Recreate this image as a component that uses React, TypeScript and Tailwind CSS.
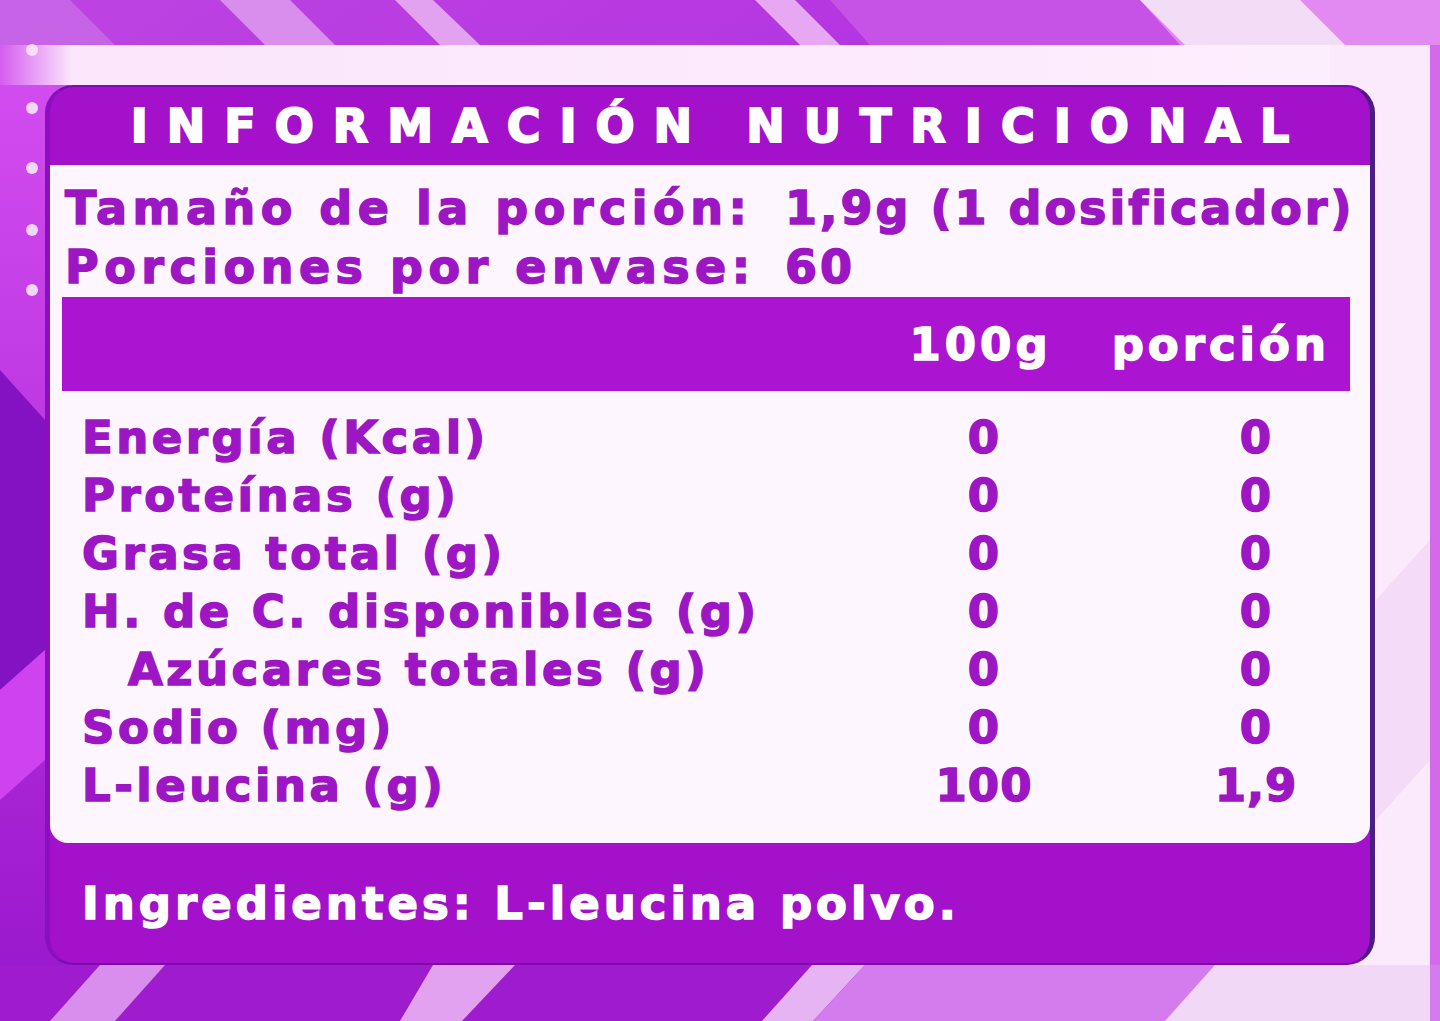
import React from "react";

const font = { fontFamily: '"DejaVu Sans", "Liberation Sans", sans-serif' };

const rows: { label: string; per100: string; portion: string; indent?: boolean }[] = [
  { label: "Energía (Kcal)", per100: "0", portion: "0" },
  { label: "Proteínas (g)", per100: "0", portion: "0" },
  { label: "Grasa total (g)", per100: "0", portion: "0" },
  { label: "H. de C. disponibles (g)", per100: "0", portion: "0" },
  { label: "Azúcares totales (g)", per100: "0", portion: "0", indent: true },
  { label: "Sodio (mg)", per100: "0", portion: "0" },
  { label: "L-leucina (g)", per100: "100", portion: "1,9" },
];

function Backdrop() {
  return (
    <svg className="absolute inset-0" width="1440" height="1021" viewBox="0 0 1440 1021" aria-hidden>
      <defs>
        <linearGradient id="base" x1="0" y1="0" x2="1" y2="1">
          <stop offset="0" stopColor="#bd44e2" />
          <stop offset="0.5" stopColor="#b02ee0" />
          <stop offset="1" stopColor="#9a1ccb" />
        </linearGradient>
        <linearGradient id="band" x1="0" y1="0" x2="1" y2="0">
          <stop offset="0" stopColor="#d55cef" />
          <stop offset="0.05" stopColor="#fbe6fc" />
          <stop offset="1" stopColor="#fdeefd" />
        </linearGradient>
        <linearGradient id="left" x1="0" y1="0" x2="0" y2="1">
          <stop offset="0" stopColor="#d24cf0" />
          <stop offset="1" stopColor="#9a18cc" />
        </linearGradient>
      </defs>
      <rect width="1440" height="1021" fill="url(#base)" />
      {/* top stripes */}
      <polygon points="0,0 70,0 115,45 0,45" fill="#c763e6" />
      <polygon points="220,0 290,0 335,45 265,45" fill="#d98ded" />
      <polygon points="395,0 433,0 480,45 440,45" fill="#e2a2f0" />
      <polygon points="755,0 795,0 840,45 800,45" fill="#e6a8f2" />
      <polygon points="830,0 1140,0 1180,45 870,45" fill="#c653e6" />
      <polygon points="1140,0 1440,0 1440,45 1180,45" fill="#e389f2" />
      <polygon points="1140,0 1300,0 1345,45 1185,45" fill="#f3dcf6" />
      {/* light band behind card */}
      <rect x="0" y="45" width="1440" height="60" fill="url(#band)" />
      <rect x="1330" y="45" width="100" height="976" fill="#fbe9fc" />
      <polygon points="1430,45 1440,45 1440,1021 1430,1021" fill="#d46aea" />
      <polygon points="1376,600 1430,540 1430,760 1376,820" fill="#f4dcf8" />
      {/* left edge */}
      <rect x="0" y="85" width="70" height="900" fill="url(#left)" />
      <polygon points="0,370 45,420 45,650 0,690" fill="#8512c2" />
      <polygon points="0,690 45,650 45,760 0,800" fill="#cf42ef" />
      {[50, 108, 168, 230, 290].map((y) => (
        <circle key={y} cx="32" cy={y} r="6" fill="#fbe6fc" opacity="0.9" />
      ))}
      {/* bottom stripes */}
      <rect x="0" y="965" width="1330" height="56" fill="#9e1ccd" />
      <polygon points="100,965 165,965 115,1021 50,1021" fill="#d98ded" />
      <polygon points="433,965 515,965 462,1021 400,1021" fill="#e2a2f0" />
      <polygon points="812,965 865,965 813,1021 762,1021" fill="#e6b4f2" />
      <polygon points="865,965 1440,965 1440,1021 813,1021" fill="#d47ced" />
      <polygon points="1215,965 1430,965 1430,1021 1165,1021" fill="#f2d8f7" />
    </svg>
  );
}

export default function App() {
  return (
    <div className="relative w-[1440px] h-[1021px] overflow-hidden" style={font}>
      <Backdrop />
      <div className="relative pt-[85px] pl-[45px]">
        <div className="w-[1330px] h-[880px] flex flex-col bg-[#a311cb] rounded-[28px] border-t-[2px] border-b-[2px] border-l-[5px] border-r-[5px] border-t-[#7c0cb2] border-b-[#7a0cae] border-l-[#8a10bf] border-r-[#4b1c86] overflow-hidden">
          {/* Title */}
          <div className="h-[78px] flex items-center justify-center text-white font-bold text-[46px] leading-none tracking-[19px] pl-[19px] [-webkit-text-stroke:2px_#ffffff]">
            INFORMACIÓN NUTRICIONAL
          </div>

          {/* Body */}
          <div className="h-[678px] bg-[#fdf6fe] rounded-b-[18px] flex flex-col text-[#9c16c4] font-bold [-webkit-text-stroke:1.5px_#9c16c4]">
            <div className="pt-[13px] pl-[15px] text-[46px] leading-none">
              <div className="h-[59px] flex items-center">
                <span className="w-[720px] tracking-[5.5px]">Tamaño de la porción:</span>
                <span className="tracking-[3px]">1,9g (1 dosificador)</span>
              </div>
              <div className="h-[59px] flex items-center">
                <span className="w-[720px] tracking-[5.5px]">Porciones por envase:</span>
                <span className="tracking-[3px]">60</span>
              </div>
            </div>

            <div className="ml-[12px] mr-[20px] mt-[1px] h-[94px] bg-[#ab14d0] flex items-center justify-end gap-[60px] pr-[20px] text-white text-[45px] leading-none tracking-[4px] [-webkit-text-stroke:1.5px_#ffffff]">
              <span>100g</span>
              <span>porción</span>
            </div>

            <div className="pt-[17px] text-[45px] leading-none">
              {rows.map((r) => (
                <div key={r.label} className="h-[58px] flex items-center">
                  <span className={`w-[884px] tracking-[3.5px] ${r.indent ? "pl-[78px]" : "pl-[32px]"}`}>
                    {r.label}
                  </span>
                  <span className="w-[100px] text-center tracking-[1px]">{r.per100}</span>
                  <span className="w-[172px]" />
                  <span className="w-[100px] text-center tracking-[1px]">{r.portion}</span>
                </div>
              ))}
            </div>
          </div>

          {/* Ingredients */}
          <div className="flex-1 flex items-center pl-[32px] text-white font-bold text-[45px] leading-none tracking-[4px] [-webkit-text-stroke:1.5px_#ffffff]">
            Ingredientes: L-leucina polvo.
          </div>
        </div>
      </div>
    </div>
  );
}
